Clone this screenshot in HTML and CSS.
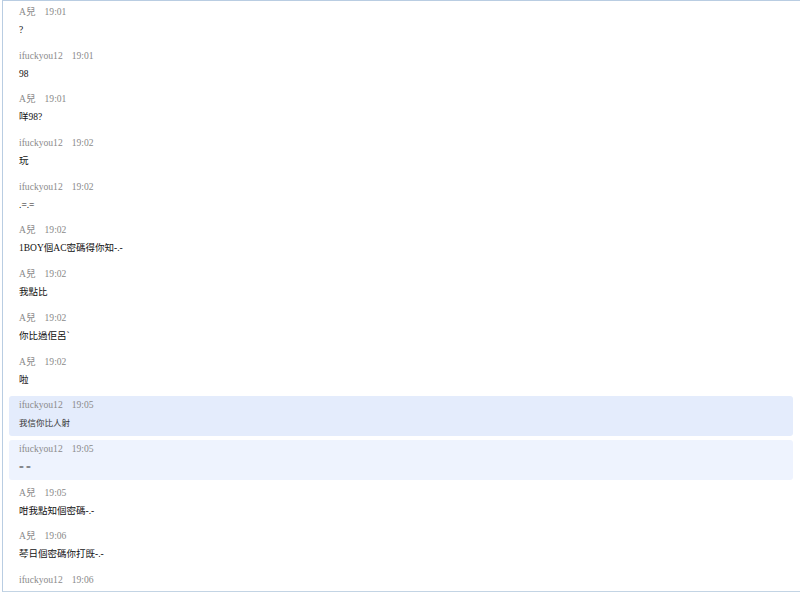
FILE: index.html
```html
<!DOCTYPE html>
<html lang="zh-Hant">
<head>
<meta charset="utf-8">
<title>Chat</title>
<link rel="stylesheet" href="styles.css">
</head>
<body>
<div class="frame">
  <div class="msg"><div class="meta"><span class="name">A兒</span><span class="time">19:01</span></div><div class="text">?</div></div>
  <div class="msg"><div class="meta"><span class="name">ifuckyou12</span><span class="time">19:01</span></div><div class="text">98</div></div>
  <div class="msg"><div class="meta"><span class="name">A兒</span><span class="time">19:01</span></div><div class="text">咩98?</div></div>
  <div class="msg"><div class="meta"><span class="name">ifuckyou12</span><span class="time">19:02</span></div><div class="text">玩</div></div>
  <div class="msg"><div class="meta"><span class="name">ifuckyou12</span><span class="time">19:02</span></div><div class="text">.=.=</div></div>
  <div class="msg"><div class="meta"><span class="name">A兒</span><span class="time">19:02</span></div><div class="text">1BOY個AC密碼得你知-.-</div></div>
  <div class="msg"><div class="meta"><span class="name">A兒</span><span class="time">19:02</span></div><div class="text">我點比</div></div>
  <div class="msg"><div class="meta"><span class="name">A兒</span><span class="time">19:02</span></div><div class="text">你比過佢呂`</div></div>
  <div class="msg"><div class="meta"><span class="name">A兒</span><span class="time">19:02</span></div><div class="text">啦</div></div>
  <div class="msg hl"><div class="meta"><span class="name">ifuckyou12</span><span class="time">19:05</span></div><div class="text small">我信你比人射</div></div>
  <div class="msg hl2"><div class="meta"><span class="name">ifuckyou12</span><span class="time">19:05</span></div><div class="text small">= =</div></div>
  <div class="msg"><div class="meta"><span class="name">A兒</span><span class="time">19:05</span></div><div class="text">咁我點知個密碼-.-</div></div>
  <div class="msg"><div class="meta"><span class="name">A兒</span><span class="time">19:06</span></div><div class="text">琴日個密碼你打既-.-</div></div>
  <div class="msg"><div class="meta"><span class="name">ifuckyou12</span><span class="time">19:06</span></div><div class="text"></div></div>
</div>
</body>
</html>
```
FILE: styles.css
```css
html, body {
  margin: 0;
  padding: 0;
  background: #ffffff;
  overflow: hidden;
}
body {
  width: 800px;
  height: 593px;
}
.frame {
  margin-left: 2px;
  width: 798px;
  height: 592px;
  border-top: 1px solid #b9cde2;
  border-left: 1px solid #b9cde2;
  border-bottom: 1px solid #c3d4e4;
  padding: 2px 7px 0 6px;
  box-sizing: border-box;
  overflow: hidden;
  display: flex;
  flex-direction: column;
  gap: 4px;
}
.msg {
  flex: none;
  height: 39.7px;
  padding: 1px 10px 0;
  border-radius: 3px;
  box-sizing: border-box;
}
.hl {
  background: #e4ecfc;
}
.hl2 {
  background: #eef3fe;
}
.meta {
  font-family: "Liberation Serif", "Noto Sans CJK TC", serif;
  font-size: 9.6px;
  line-height: 16px;
  color: #8a8a8a;
  display: flex;
  gap: 9px;
}
.text {
  margin-top: 2px;
  font-family: "Liberation Serif", "Noto Sans CJK TC", serif;
  font-size: 9.5px;
  line-height: 16px;
  height: 16px;
  color: #111;
}
.text.small {
  font-size: 8.5px;
  color: #333;
}
```
